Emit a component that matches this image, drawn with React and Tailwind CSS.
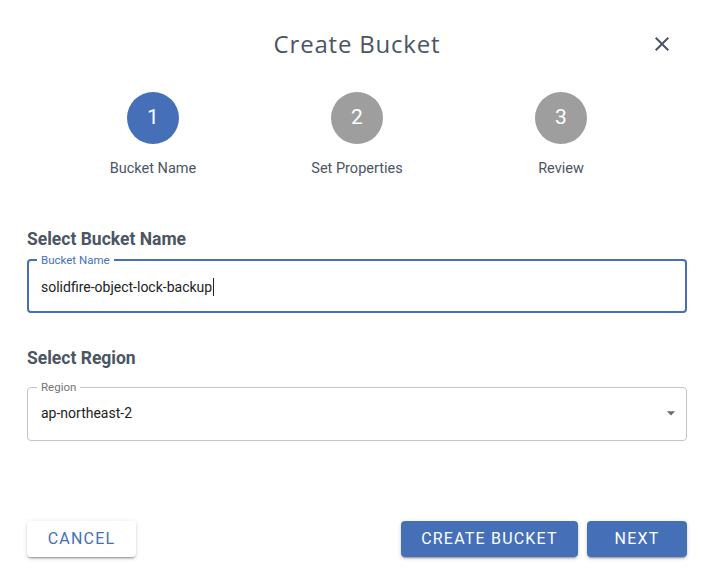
import { useState } from "react";

const steps = ["Bucket Name", "Set Properties", "Review"];

const raised = "shadow-[0_3px_1px_-2px_rgba(0,0,0,0.2),0_2px_2px_0_rgba(0,0,0,0.14),0_1px_5px_0_rgba(0,0,0,0.12)]";

const CreateBucketDialog = () => {
  const [active] = useState(0);

  return (
    <div className="w-[713px] h-[585px] bg-white pl-[27px] pr-[26px] font-['Roboto',sans-serif] text-[#4b5563]">
      {/* Header */}
      <div className="mt-[24px] h-[40px] grid grid-cols-[1fr_auto_1fr] items-center">
        <div />
        <h2 className="font-['Open_Sans',sans-serif] text-[24px] tracking-[0.8px] text-[#4b5563]">Create Bucket</h2>
        <div className="flex justify-end pr-[13px]">
          <button type="button" className="w-[24px] h-[24px] text-[#4b5563]">
            <svg viewBox="0 0 24 24" className="w-[24px] h-[24px] fill-current">
              <path d="M19 6.41 17.59 5 12 10.59 6.41 5 5 6.41 10.59 12 5 17.59 6.41 19 12 13.41 17.59 19 19 17.59 13.41 12z" />
            </svg>
          </button>
        </div>
      </div>

      {/* Stepper */}
      <div className="mt-[28px] px-[24px] grid grid-cols-3">
        {steps.map((s, i) => (
          <div key={s} className="flex flex-col items-center">
            <div
              className={`w-[52px] h-[52px] rounded-full flex items-center justify-center text-white text-[21px] ${
                i === active ? "bg-[#4570b8]" : "bg-[#9e9e9e]"
              }`}
            >
              {i + 1}
            </div>
            <span className="mt-[15px] leading-[20px] text-[14.5px] text-[#4b5563]">{s}</span>
          </div>
        ))}
      </div>

      {/* Bucket name */}
      <h3 className="mt-[48px] leading-[24px] text-[17.5px] font-bold text-[#4b5563]">Select Bucket Name</h3>
      <fieldset className="mt-[2px] h-[60px] border-2 border-[#4570b8] rounded-[4px] px-[8px] pb-[4px]">
        <legend className="px-[4px] text-[11.5px] leading-[14px] text-[#4570b8]">Bucket Name</legend>
        <div className="h-[40px] px-[4px] flex items-center text-[14px] text-[#222]">
          solidfire-object-lock-backup
          <span className="ml-[1px] w-[1px] h-[18px] bg-[#222]" />
        </div>
      </fieldset>

      {/* Region */}
      <h3 className="mt-[33px] leading-[24px] text-[17.5px] font-bold text-[#4b5563]">Select Region</h3>
      <fieldset className="mt-[10px] h-[61px] border border-[#c4c4c4] rounded-[4px] pl-[9px] pr-[5px] pb-[8px]">
        <legend className="px-[4px] text-[11.5px] leading-[14px] text-[#757575]">Region</legend>
        <div className="h-[38px] pl-[4px] flex items-center justify-between text-[14px] text-[#222]">
          <span>ap-northeast-2</span>
          <svg viewBox="0 0 24 24" className="w-[20px] h-[20px] fill-[#6b6b6b]">
            <path d="M7 10l5 5 5-5z" />
          </svg>
        </div>
      </fieldset>

      {/* Actions */}
      <div className="mt-[80px] flex justify-between">
        <button type="button" className={`w-[109px] h-[36px] rounded-[4px] bg-white text-[#4570b8] text-[16px] tracking-[1.2px] uppercase ${raised}`}>
          Cancel
        </button>
        <div className="flex gap-[9px]">
          <button type="button" className={`w-[177px] h-[36px] rounded-[4px] bg-[#4570b8] text-white text-[16px] tracking-[1.2px] uppercase ${raised}`}>
            Create Bucket
          </button>
          <button type="button" className={`w-[100px] h-[36px] rounded-[4px] bg-[#4570b8] text-white text-[16px] tracking-[1.2px] uppercase ${raised}`}>
            Next
          </button>
        </div>
      </div>
    </div>
  );
};

export default function App() {
  return <CreateBucketDialog />;
}
